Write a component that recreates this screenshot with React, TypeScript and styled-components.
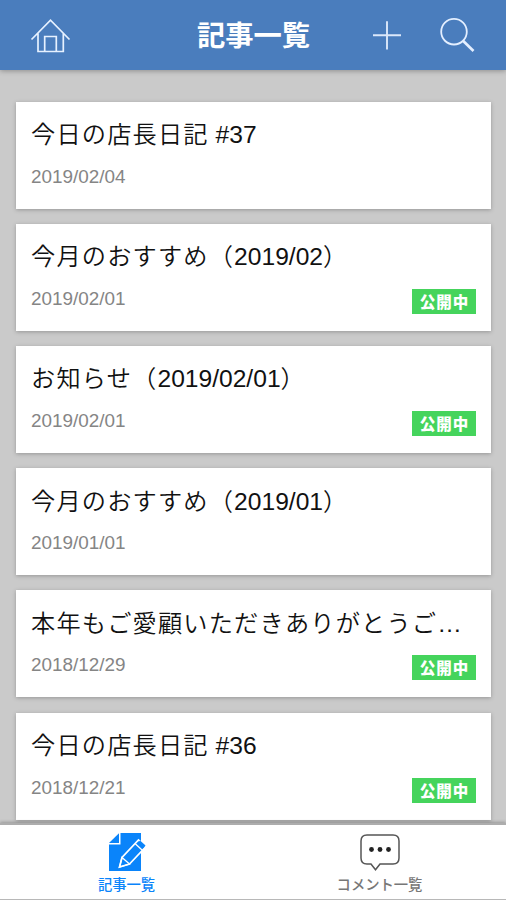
import React from 'react';
import styled, { createGlobalStyle } from 'styled-components';

const GlobalStyle = createGlobalStyle`
  * { box-sizing: border-box; }
  body {
    margin: 0;
    background: #cacaca;
    font-family: "Liberation Sans", "Noto Sans CJK JP", sans-serif;
  }
`;

const Screen = styled.div`
  width: 506px;
  height: 900px;
  display: flex;
  flex-direction: column;
  overflow: hidden;
  background: #cacaca;
`;

const Header = styled.header`
  flex: none;
  height: 70px;
  display: grid;
  grid-template-columns: 1fr 116px 1fr;
  align-items: center;
  background: #4a7dbd;
  box-shadow: 0 1px 5px rgba(0, 0, 0, 0.3);
  z-index: 1;
  svg { display: block; }
`;

const HeaderLeft = styled.div`
  padding-left: 30px;
`;

const HeaderTitle = styled.h1`
  margin: 0;
  padding: 1px 0 0 1px;
  font-size: 28.3px;
  line-height: 40px;
  font-weight: 700;
  color: #fff;
  white-space: nowrap;
  text-align: center;
`;

const HeaderRight = styled.div`
  display: flex;
  justify-content: flex-end;
  align-items: center;
  gap: 39px;
  padding-right: 31px;
`;

const List = styled.main`
  flex: 1;
  min-height: 0;
  overflow: hidden;
  display: flex;
  flex-direction: column;
  gap: 15.2px;
  padding: 31.6px 15px 0 16px;
`;

const Card = styled.article`
  flex: none;
  height: 107px;
  padding: 11.4px 15px 17px;
  display: flex;
  flex-direction: column;
  justify-content: space-between;
  background: #fff;
  box-shadow: 0 1px 4px rgba(0, 0, 0, 0.26);
`;

const Title = styled.h2`
  margin: 0;
  height: 38px;
  line-height: 39px;
  font-size: 24.6px;
  font-weight: 400;
  color: #111;
  white-space: nowrap;
`;

const Kana = styled.span`
  font-family: "Noto Sans CJK JP", sans-serif;
  font-weight: 350;
  font-size: 24.2px;
  letter-spacing: 1.2px;
`;

const Meta = styled.div`
  display: flex;
  justify-content: space-between;
  align-items: flex-end;
  height: 25px;
`;

const DateText = styled.time`
  align-self: flex-start;
  margin-top: -1px;
  font-size: 18.9px;
  line-height: 22px;
  color: #858585;
`;

const Badge = styled.span`
  width: 64px;
  height: 25px;
  padding-left: 1px;
  text-align: center;
  background: #45d45c;
  color: #fff;
  font-family: "Noto Sans CJK JP", sans-serif;
  font-size: 15.5px;
  line-height: 24px;
  font-weight: 900;
  letter-spacing: 1px;
`;

const TabBar = styled.nav`
  flex: none;
  height: 77px;
  display: grid;
  grid-template-columns: 1fr 1fr;
  background: #fff;
  border-top: 2px solid #adadad;
  border-bottom: 1px solid #b8b8b8;
  box-shadow: 0 -1px 3px rgba(0, 0, 0, 0.25);
  z-index: 1;
`;

const Tab = styled.div<{ $active?: boolean }>`
  display: flex;
  flex-direction: column;
  align-items: center;
  padding-top: 7px;
  color: ${p => (p.$active ? '#0a84fa' : '#777')};
  font-size: 14.3px;
  line-height: 18px;
  font-weight: 500;
  svg { display: block; margin-bottom: 4px; }
`;

const posts = [
  { title: '今日の店長日記 #37', date: '2019/02/04', open: false },
  { title: '今月のおすすめ（2019/02）', date: '2019/02/01', open: true },
  { title: 'お知らせ（2019/02/01）', date: '2019/02/01', open: true },
  { title: '今月のおすすめ（2019/01）', date: '2019/01/01', open: false },
  { title: '本年もご愛顧いただきありがとうご…', date: '2018/12/29', open: true },
  { title: '今日の店長日記 #36', date: '2018/12/21', open: true },
];

const splitRuns = (text: string) => text.match(/[\u3000-\uffef]+|[^\u3000-\uffef]+/g) ?? [];

function PostTitle({ text }: { text: string }) {
  return (
    <Title>
      {splitRuns(text).map((run, i) =>
        /^[\u3000-\uffef]/.test(run) ? <Kana key={i}>{run}</Kana> : <span key={i}>{run}</span>
      )}
    </Title>
  );
}

const HomeIcon = () => (
  <svg width="42" height="36" viewBox="0 0 42 36" fill="none" stroke="#e6f1ff" strokeWidth="1.7">
    <path d="M1.5 22.5 20.5 3.2 39.5 22.5M8 16.5V34.5H33.3V16.5M14.7 34.5V19.5H26.3V34.5" />
  </svg>
);

const PlusIcon = () => (
  <svg width="28" height="30" viewBox="0 0 28 30" fill="none" stroke="#dce8fa" strokeWidth="1.9">
    <path d="M0 15.2H28M14 1.3V29.5" />
  </svg>
);

const SearchIcon = () => (
  <svg width="35" height="36" viewBox="0 0 35 36" fill="none" stroke="#e4efff">
    <circle cx="14" cy="14.7" r="12.8" strokeWidth="1.8" />
    <path d="M23 23.8 33.5 34" strokeWidth="2.7" />
  </svg>
);

const NoteIcon = () => (
  <svg width="38" height="40" viewBox="0 0 38 40">
    <path d="M12.5 1H33V39H1V12.5H12.5Z" fill="#0a84fa" />
    <path d="M1 11 11 1.2V11Z" fill="#0a84fa" />
    <path d="M11.5 35 14 25.5 30.5 8 38 14.6 21.5 32Z" fill="#0a84fa" stroke="#fff" strokeWidth="1.7" />
    <path d="M14 25.5 21.5 32 11.5 35ZM27 11.5 34.3 18.3" fill="none" stroke="#fff" strokeWidth="1.3" />
    <path d="M31 9.5 36.5 14.7" stroke="#0a84fa" strokeWidth="3" />
  </svg>
);

const CommentIcon = () => (
  <svg width="42" height="40" viewBox="0 0 42 40">
    <path
      d="M8 3H34Q40 3 40 9V26Q40 32 34 32H21L16.5 37.8L12 32H8Q2 32 2 26V9Q2 3 8 3Z"
      fill="#fff"
      stroke="#555"
      strokeWidth="1.5"
    />
    <circle cx="12.5" cy="17.5" r="2.4" fill="#222" />
    <circle cx="21" cy="17.5" r="2.4" fill="#222" />
    <circle cx="29.5" cy="17.5" r="2.4" fill="#222" />
  </svg>
);

export default function App() {
  return (
    <Screen>
      <GlobalStyle />
      <Header>
        <HeaderLeft><HomeIcon /></HeaderLeft>
        <HeaderTitle>記事一覧</HeaderTitle>
        <HeaderRight><PlusIcon /><SearchIcon /></HeaderRight>
      </Header>
      <List>
        {posts.map(post => (
          <Card key={post.title}>
            <PostTitle text={post.title} />
            <Meta>
              <DateText>{post.date}</DateText>
              {post.open && <Badge>公開中</Badge>}
            </Meta>
          </Card>
        ))}
      </List>
      <TabBar>
        <Tab $active><NoteIcon />記事一覧</Tab>
        <Tab><CommentIcon />コメント一覧</Tab>
      </TabBar>
    </Screen>
  );
}
